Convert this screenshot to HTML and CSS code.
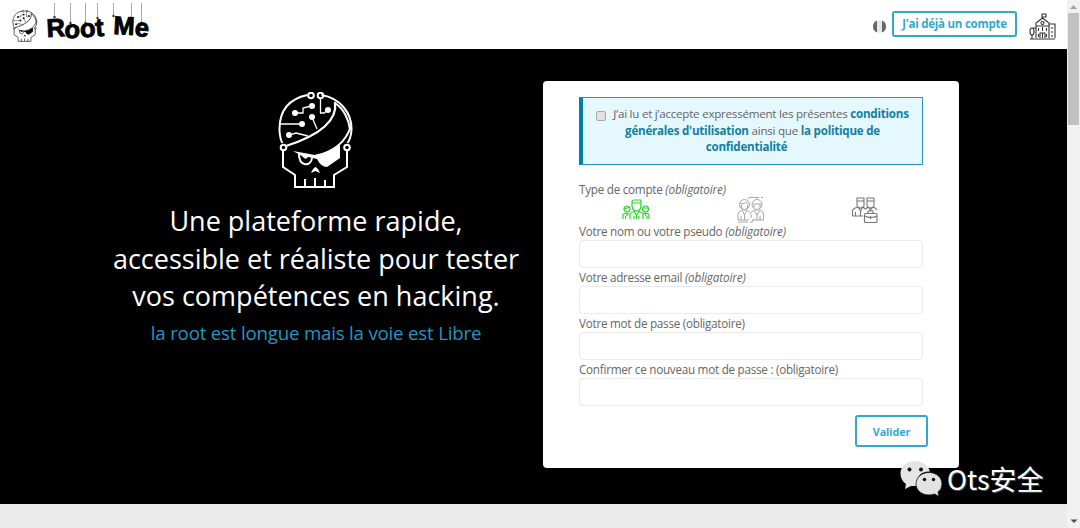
FILE: index.html
```html
<!DOCTYPE html>
<html lang="fr">
<head>
<meta charset="utf-8">
<title>Root Me</title>
<link rel="stylesheet" href="styles.css">
</head>
<body>
<svg class="defs" width="0" height="0" aria-hidden="true">
  <symbol id="skull" viewBox="0 0 76 97">
    <g fill="none" stroke="currentColor" stroke-width="2">
      <path d="M29.5 3C10 7 1 20 1.500 39C2 45 3 49 4.500 51M43.500 3C62 6 74 21 73.500 38C73 45 71 49 69.500 51M5 58V75L17 83V95H56V83L69 75V58"/>
      <path stroke-width="2.300" d="M8 54C36 45 60 31 57 10"/>
      <path d="M57 11C66 17 71 28 72 38M73 34C68 50 55 60 37 64"/>
      <circle cx="33" cy="3.500" r="2.800"/><circle cx="42.500" cy="3.500" r="2.800"/>
      <circle cx="5.500" cy="55.500" r="2.800"/><circle cx="69" cy="55.500" r="2.800"/>
      <path stroke-width="1.300" d="M42.500 7V21H46L50 18M33 14L25 16V21H17M34 25L39 37M2 32H23M11 43L18 41L30 44"/>
      <path d="M21 62C21 75 33 75 34 66M27 95V87M37 95V86M47 95V88"/>
    </g>
    <g fill="currentColor">
      <circle cx="34" cy="14" r="3"/><circle cx="17" cy="21" r="3"/><circle cx="34" cy="25" r="3"/><circle cx="50" cy="18" r="3"/><circle cx="24" cy="32" r="3"/><circle cx="11" cy="43" r="3"/>
      <path d="M15 59L37 63Q52 61 62 53V66L49 75Q43 75 39 67L30 65Q28 69 24 64ZM33 81Q35 76 37.500 75Q40 76 42 81L37.500 79Z"/>
    </g>
  </symbol>
</svg>
<div class="screen">
  <div class="page">
    <header class="topbar">
      <a class="brand">
        <svg class="brand-skull"><use href="#skull"/></svg>
        <svg class="brand-name" width="120" height="48" viewBox="0 0 120 48">
          <g stroke="#aaa" stroke-width="1"><path d="M8.500 3V18M24.500 3V24M39.500 3V24M51.500 3V19M67.500 3V16M85.500 3V18M95.500 3V24"/></g>
          <g fill="#333"><circle cx="8.500" cy="17" r="1.200"/><circle cx="24.500" cy="23" r="1.200"/><circle cx="39.500" cy="23" r="1.200"/><circle cx="51.500" cy="18" r="1.200"/><circle cx="67.500" cy="16" r="1.200"/><circle cx="85.500" cy="18" r="1.200"/><circle cx="95.500" cy="23" r="1.200"/></g>
          <text class="brand-text" x="3 20 36.500 52 69 90" y="37 37.500 37.500 36.500 34 35.500" rotate="-3 4 -4 -5 3 7">RootMe</text>
        </svg>
      </a>
      <nav class="tools">
        <svg class="lang" width="13" height="13" viewBox="0 0 13 13"><path fill="#666" d="M4 .5V12.500A6.500 6.500 0 0 1 4 .5Z"/><path fill="#e8e8e8" d="M4 .5H9V12.500H4Z"/><path fill="#666" d="M9 .5A6.500 6.500 0 0 1 9 12.500Z"/></svg>
        <a class="btn login">J'ai déjà un compte</a>
        <svg class="school" width="27" height="27" viewBox="0 0 27 27" fill="none" stroke="#333" stroke-width="1.100">
          <path d="M13 6V1H17V4H13M7 13V10L13.500 5L20 10V13M7 25V13H20V25M20 11H26V25M1 26H26M4 15H7M11 25V20H16V25M13.500 20V25M9.500 15V18M13.500 14V18M17.500 15V18M23 14V16M23 18V20M23 22V24M9.500 21V24M17.500 21V24M3 26V21"/>
          <ellipse cx="3" cy="18.500" rx="2" ry="3.500"/><circle cx="13.500" cy="10" r="1.500"/>
        </svg>
      </nav>
    </header>
    <main class="hero">
      <section class="pitch">
        <svg class="hero-skull"><use href="#skull"/></svg>
        <h1>Une plateforme rapide,<br>accessible et réaliste pour tester<br>vos compétences en hacking.</h1>
        <p class="motto">la root est longue mais la voie est Libre</p>
      </section>
      <form class="card">
        <label class="terms"><input type="checkbox" class="check">J’ai lu et j’accepte expressément les présentes <b>conditions<br>générales d'utilisation</b> ainsi que <b>la politique de<br><span class="last">confidentialité</span></b></label>
        <div class="label">Type de compte <i>(obligatoire)</i></div>
        <div class="kinds">
          <svg width="28" height="28" viewBox="0 0 28 28" fill="none" stroke="#2bd52b" stroke-width="1.200">
            <path d="M10 10V6Q10 4 12 4H19V10M10 7H19M10 9Q10 15 14.500 15Q19 15 19 9M8 23V18Q9 16 12 15.500L14.500 19L17 15.500Q20 16 21 18V23M12 20V23M17 20V23M14.500 19V23"/>
            <circle cx="5" cy="13" r="3"/><circle cx="23.500" cy="13" r="3"/><path d="M2 12Q4 13 7 11M21 12H26M1 23V19Q2 17 5 17L7 18M27 23V19Q26 17 23.500 17L21 18M3.500 20V23M25 20V23M5 17V20M23.500 17V20"/>
          </svg>
          <svg width="28" height="28" viewBox="0 0 28 28" fill="none" stroke="#a6a6a6" stroke-width="1">
            <path d="M12 1.500H22M24 1.500H26M1 26H11M13 26H15M13 1.500L11 3M15 26L17 24"/>
            <circle cx="7.500" cy="8.500" r="5"/><circle cx="20" cy="8.500" r="5"/><path d="M3 8Q8 8 9 6Q10 8 12 8M15.500 8H24.500M4.500 9V12Q7.500 16 10.500 12V9M17 9V12Q20 16 23 12V9M1 24V18Q2 15 5 14L7.500 19L10 14L13.500 17L17 14L20 19L23 14Q26 15 26.500 18V24H15M1 24H12M7.500 19V24M20 19V24M4 20V24M23 20V24M13 18L15 20L13 22"/>
          </svg>
          <svg width="28" height="28" viewBox="0 0 28 28" fill="none" stroke="#777" stroke-width="1.100">
            <path d="M6 10V2H13V10Q9.500 14 6 10ZM6 5H13M16 10V2H23V10Q19.500 14 16 10ZM16 5H23M1.500 20V14Q3 12 7 11L9.500 15L12 11L14.500 13L17 11L19.500 14L22 11Q25 12 26 14M1.500 20H12M9.500 15V20M4.500 16V20M19.500 13V15M17 17V15H22V17"/>
            <rect x="13.500" y="17.500" width="12.500" height="9" rx="1"/><path d="M13.500 20Q20 23 26 20M19.500 20V23"/>
          </svg>
        </div>
        <label class="label" for="name">Votre nom ou votre pseudo <i>(obligatoire)</i></label>
        <input class="field" id="name">
        <label class="label" for="mail">Votre adresse email <i>(obligatoire)</i></label>
        <input class="field" id="mail">
        <label class="label" for="pw">Votre mot de passe (obligatoire)</label>
        <input class="field" id="pw">
        <label class="label" for="pw2">Confirmer ce nouveau mot de passe : (obligatoire)</label>
        <input class="field" id="pw2">
        <button class="btn submit" type="button">Valider</button>
      </form>
    </main>
  </div>
  <aside class="scroll">
    <svg width="13" height="13" viewBox="0 0 13 13"><path fill="#a3a3a3" d="M3 9L6.500 5L10 9Z"/></svg>
    <div class="thumb"></div>
    <svg class="down" width="13" height="13" viewBox="0 0 13 13"><path fill="#505050" d="M3.500 4.500H10.500L7 8Z"/></svg>
  </aside>
  <div class="mark">
    <svg width="43" height="37" viewBox="0 0 43 37">
      <path fill="#e5e5e5" d="M15 1C6.500 1 .5 6.500 .5 13.500C.5 18 2.500 21.500 6 24L5 29L11 26H18C15 16 22 11 30 11.500C28 5 22 1 15 1Z"/>
      <path fill="#e2e2e2" stroke="#111" stroke-width=".8" d="M29 12.500C21.500 12.500 16 17.500 16 24C16 30.500 22 35 29 35Q32 35 34.500 34L39 36.500L38 32Q42 29 42 24C42 17.500 36.500 12.500 29 12.500Z"/>
      <g fill="#111"><circle cx="9.500" cy="9.500" r="2"/><circle cx="21" cy="9.500" r="2"/><circle cx="24.500" cy="19.500" r="1.700"/><circle cx="33.500" cy="19.500" r="1.700"/></g>
    </svg>
    <span>Ots安全</span>
  </div>
</div>
</body>
</html>
```
FILE: styles.css
```css
* { box-sizing: border-box; }
body { margin: 0; font-family: "Open Sans", sans-serif; color: #666; overflow: hidden; }
.defs { position: absolute; }
.screen { position: relative; display: flex; width: 1080px; height: 528px; background: #ebebeb; }
.page { width: 1067px; }
.topbar { display: flex; justify-content: space-between; height: 49px; padding-left: 12px; padding-right: 11px; background: #fff; }
.brand { display: flex; }
.brand-skull { width: 26px; height: 32px; margin-top: 10px; margin-right: 8px; color: #111; }
.brand-text { font: bold 25.5px "Liberation Sans", sans-serif; fill: #000; stroke: #000; stroke-width: .9px; transform: translateX(-2px); }
.tools { display: flex; align-items: flex-start; }
.lang { margin: 20px 6px 0 0; }
.btn { border: 2px solid #31a9cc; border-radius: 3px; background: #fff; color: #31a9cc; font-family: inherit; font-weight: 700; text-align: center; }
.login { width: 125px; height: 26px; margin: 11px 12px 0 0; font-size: 11.500px; line-height: 22px; letter-spacing: -.25px; }
.school { margin-top: 13px; }
.hero { display: flex; align-items: flex-start; height: 455px; padding: 32px 108px 0 90px; background: #000; }
.pitch { width: 452px; margin-right: 1px; text-align: center; }
.hero-skull { display: block; width: 76px; height: 97px; margin: 11px auto 0 188px; color: #fff; }
h1 { margin: 13px 0 0; color: #fff; font-size: 27px; font-weight: 400; line-height: 37.5px; }
.motto { margin: 4px 0 0; color: #2197c2; font-size: 18.7px; line-height: 28px; letter-spacing: -.2px; }
.card { display: flex; flex-direction: column; width: 416px; height: 387px; padding: 16px 36px 0; border-radius: 4px; background: #fff; }
.terms { display: block; height: 68px; margin-bottom: 15px; padding-top: 8px; border: 1px solid #2596bb; border-left: 4px solid #00819f; background: #e5f8fe; font-size: 11.600px; line-height: 16.500px; letter-spacing: -.24px; text-align: center; white-space: nowrap; }
.terms b { color: #13809f; }
.last { margin-right: 12px; }
.check { appearance: none; width: 10px; height: 10px; margin: 0 7px 0 0; border: 1px solid #aaa; border-radius: 2px; background: #e2e2e2; vertical-align: -3px; }
.label { height: 18px; font-size: 11.700px; line-height: 18px; letter-spacing: -.26px; white-space: nowrap; }
.label i { letter-spacing: -.13px; }
.kinds { display: flex; justify-content: space-between; height: 24px; padding: 0 44px 0 43px; }
.kinds svg { margin-top: -2px; }
.field { width: 344px; height: 28px; margin: 0; border: 1px solid #eaeaea; border-radius: 4px; background: #fff; }
.submit { align-self: flex-end; width: 73px; height: 32px; margin: 9px -5px 0 0; padding: 0; font-size: 10.800px; letter-spacing: -.1px; }
.scroll { display: flex; flex-direction: column; align-items: center; width: 13px; background: #f1f1f1; }
.thumb { width: 11px; height: 112px; background: #c1c1c1; }
.down { margin-top: auto; }
.mark { position: absolute; left: 900px; top: 460px; display: flex; align-items: flex-start; color: #fff; }
.mark span { margin-left: 4px; font: 27px/38px "Noto Sans CJK SC", sans-serif; text-shadow: 1px 1px 1px #555; white-space: nowrap; }
```
